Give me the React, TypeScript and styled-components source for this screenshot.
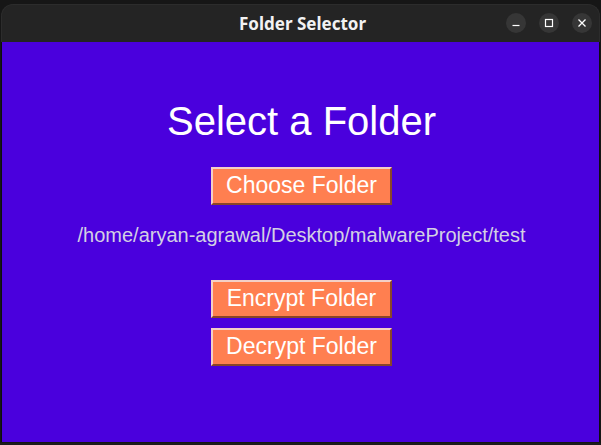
import styled, { createGlobalStyle } from 'styled-components';

const GlobalStyle = createGlobalStyle`
    html, body {
        margin: 0;
        padding: 0;
        background: #161616;
        overflow: hidden;
    }
`;

export default function App() {
    return (
        <>
            <GlobalStyle/>
            <Desktop>
                <Window>
                    <TitleBar>
                        <Title>Folder Selector</Title>
                        <Controls>
                            <CtrlButton aria-label="minimize">
                                <svg width="10" height="10" viewBox="0 0 10 10">
                                    <path d="M1.5 7.5H8.5" stroke="#ffffff" strokeWidth="1.2"/>
                                </svg>
                            </CtrlButton>
                            <CtrlButton aria-label="maximize">
                                <svg width="10" height="10" viewBox="0 0 10 10">
                                    <rect x="1.5" y="1.5" width="7" height="7" fill="none" stroke="#ffffff" strokeWidth="1.2"/>
                                </svg>
                            </CtrlButton>
                            <CtrlButton aria-label="close">
                                <svg width="10" height="10" viewBox="0 0 10 10">
                                    <path d="M1.5 1.5L8.5 8.5M8.5 1.5L1.5 8.5" stroke="#ffffff" strokeWidth="1.3"/>
                                </svg>
                            </CtrlButton>
                        </Controls>
                    </TitleBar>
                    <Content>
                        <Heading>Select a Folder</Heading>
                        <ActionButton>Choose Folder</ActionButton>
                        <PathLabel>/home/aryan-agrawal/Desktop/malwareProject/test</PathLabel>
                        <ButtonGroup>
                            <ActionButton>Encrypt Folder</ActionButton>
                            <ActionButton>Decrypt Folder</ActionButton>
                        </ButtonGroup>
                    </Content>
                </Window>
                <BottomEdge/>
            </Desktop>
        </>
    )
}

const Desktop = styled.div`
    width: 601px;
    height: 445px;
    display: flex;
    flex-direction: column;
    background: #161616;
    overflow: hidden;
`;

const Window = styled.div`
    margin: 4px 1px 0 1px;
    display: flex;
    flex-direction: column;
`;

const TitleBar = styled.div`
    position: relative;
    height: 38px;
    background: #242424;
    border-radius: 12px 12px 0 0;
    border: 1px solid #2c2c2c;
    border-bottom: none;
    box-sizing: border-box;
    display: flex;
    align-items: center;
    justify-content: center;
`;

const Title = styled.div`
    font-family: "Noto Sans", "DejaVu Sans", sans-serif;
    font-weight: 700;
    font-size: 17px;
    color: #f2f2f2;
    margin-left: 4px;
`;

const Controls = styled.div`
    position: absolute;
    right: 7px;
    top: 8px;
    display: flex;
    gap: 13px;
`;

const CtrlButton = styled.div`
    width: 20px;
    height: 20px;
    border-radius: 50%;
    background: #363636;
    display: flex;
    align-items: center;
    justify-content: center;
`;

const Content = styled.div`
    height: 400px;
    background: #4a00dd;
    border-left: 1px solid #0e0e0e;
    border-right: 1px solid #0e0e0e;
    display: flex;
    flex-direction: column;
    align-items: center;
    padding: 56px 0 0 2px;
    box-sizing: border-box;
    font-family: "Liberation Sans", Arial, sans-serif;
`;

const Heading = styled.h1`
    margin: 0 0 23px 0;
    font-size: 40px;
    line-height: 46px;
    font-weight: 400;
    color: #ffffff;
`;

const ActionButton = styled.button`
    width: 181px;
    height: 38px;
    background: #ff7f50;
    color: #ffffff;
    font-family: "Liberation Sans", Arial, sans-serif;
    font-size: 23px;
    padding: 0 0 2px 0;
    border: 2px solid;
    border-color: #f4cfc6 #8a4528 #8a4528 #f4cfc6;
    box-sizing: border-box;
    cursor: pointer;
`;

const PathLabel = styled.div`
    margin: 19px 0 33px 0;
    font-size: 20px;
    line-height: 23px;
    color: #d3d0e4;
`;

const ButtonGroup = styled.div`
    display: flex;
    flex-direction: column;
    gap: 10px;
`;

const BottomEdge = styled.div`
    margin-top: 1px;
    height: 2px;
    background: #1c1c1c;
`;
